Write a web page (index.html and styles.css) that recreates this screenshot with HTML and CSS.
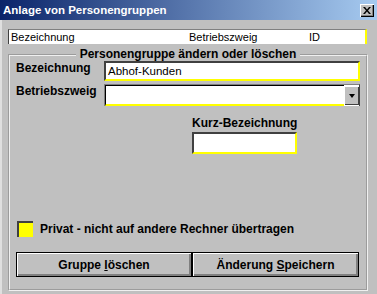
FILE: index.html
```html
<!DOCTYPE html>
<html lang="de">

<head>
	<meta charset="UTF-8">
	<meta name="viewport" content="width=device-width, initial-scale=1.0">
	<title>Anlage von Personengruppen</title>
	<link rel="stylesheet" href="styles.css">
</head>

<body>

	<div class="window">
		<div class="titlebar">
			<span class="title">Anlage von Personengruppen</span>
			<span class="close">
				<svg width="8" height="7" viewBox="0 0 8 7">
					<path d="M0 0h2l2 2.5l2-2.5h2l-3 3.5l3 3.5h-2l-2-2.5l-2 2.5h-2l3-3.5z" fill="#000"/>
				</svg>
			</span>
		</div>

		<div class="client">
			<div class="listhead">
				<span>Bezeichnung</span>
				<span>Betriebszweig</span>
				<span>ID</span>
			</div>

			<fieldset class="group">
				<legend>Personengruppe ändern oder löschen</legend>

				<div class="field">
					<label>Bezeichnung</label>
					<div class="edit">Abhof-Kunden</div>
				</div>

				<div class="field second">
					<label>Betriebszweig</label>
					<div class="combo">
						<div class="edit"></div>
						<span class="drop"><span class="arrow"></span></span>
					</div>
				</div>

				<div class="kurz">
					<label>Kurz-Bezeichnung</label>
					<div class="edit short"></div>
				</div>

				<div class="check">
					<span class="box"></span>
					<span>Privat - nicht auf andere Rechner übertragen</span>
				</div>

				<div class="buttons">
					<button class="btn wide">Gruppe <u>l</u>öschen</button>
					<button class="btn">Änderung <u>S</u>peichern</button>
				</div>
			</fieldset>
		</div>
	</div>

</body>

</html>
```

FILE: styles.css
```css
body {
	margin: 0;
	font-family: "Liberation Sans", Arial, sans-serif;
	background-color: #c0c0c0;
}

.window {
	width: 377px;
	height: 294px;
	background-color: #c0c0c0;
	overflow: hidden;
}

.titlebar {
	height: 20px;
	display: flex;
	align-items: center;
	justify-content: space-between;
	padding: 0 3px 0 3px;
	background: linear-gradient(to right, #0a246a, #a6caf0);
}

.title {
	color: white;
	font-weight: bold;
	font-size: 11.5px;
}

.close {
	width: 14px;
	height: 13px;
	display: flex;
	align-items: center;
	justify-content: center;
	background-color: #c0c0c0;
	box-shadow: inset 1px 1px #fff, inset -1px -1px #000, inset -2px -2px #808080;
}

.client {
	padding: 9px 10px 0 8px;
	box-shadow: inset 2px 0 #dfdfdf;
	height: 274px;
	box-sizing: border-box;
}

.listhead {
	display: grid;
	grid-template-columns: 178px 120px 1fr;
	height: 14px;
	padding-left: 2px;
	background-color: white;
	border-left: 1px solid #404040;
	border-top: 1px solid #808080;
	border-right: 2px solid #ffff00;
	font-size: 11px;
	line-height: 14px;
}

.group {
	margin: 4px 0 0 0;
	padding: 0 6px 0 6px;
	border: 2px groove #f0f0f0;
	height: 243px;
	box-sizing: border-box;
}

.group legend {
	margin: 0 auto;
	padding: 0 4px;
	font-size: 12px;
	font-weight: bold;
	line-height: 13px;
}

.field {
	display: flex;
	align-items: flex-start;
}

.field.second {
	margin-top: 3px;
}

label {
	width: 88px;
	font-size: 12px;
	font-weight: bold;
	line-height: 14px;
}

.edit {
	height: 20px;
	width: 256px;
	box-sizing: border-box;
	padding: 1px 0 0 2px;
	background-color: white;
	border-top: 2px solid #404040;
	border-left: 2px solid #404040;
	border-bottom: 2px solid #ffff00;
	border-right: 2px solid #ffff00;
	font-size: 11.5px;
	line-height: 14px;
}

.combo {
	display: flex;
	width: 256px;
	height: 22px;
	box-sizing: border-box;
	border-top: 1px solid #808080;
	border-left: 1px solid #808080;
	border-right: 1px solid #404040;
	background-color: white;
}

.combo .edit {
	flex: 1;
	height: 21px;
	border-top: 1px solid #000;
	border-left: 1px solid #000;
	border-right: none;
}

.drop {
	width: 15px;
	height: 19px;
	margin-top: 1px;
	display: flex;
	align-items: center;
	justify-content: center;
	background-color: #c0c0c0;
	box-shadow: inset 1px 1px #fff, inset -1px -1px #404040;
}

.arrow {
	width: 0;
	height: 0;
	border-left: 3px solid transparent;
	border-right: 3px solid transparent;
	border-top: 4px solid #000;
}

.kurz {
	margin: 10px 0 0 176px;
}

.kurz label {
	display: block;
	width: auto;
}

.edit.short {
	width: 105px;
	height: 22px;
	margin-top: 2px;
}

.check {
	display: flex;
	align-items: center;
	gap: 7px;
	margin: 67px 0 0 1px;
	font-size: 12px;
	font-weight: bold;
}

.box {
	width: 16px;
	height: 16px;
	box-sizing: border-box;
	background-color: #ffff00;
	border-top: 2px solid #404040;
	border-left: 2px solid #404040;
}

.buttons {
	display: flex;
	margin-top: 15px;
}

.btn {
	width: 167px;
	height: 25px;
	padding: 0;
	background-color: #c0c0c0;
	border: 1px solid #000;
	box-shadow: inset 1px 1px #fff, inset -2px -2px #808080;
	font-family: "Liberation Sans", Arial, sans-serif;
	font-size: 12px;
	font-weight: bold;
	color: black;
}

.btn.wide {
	width: 176px;
}
```
